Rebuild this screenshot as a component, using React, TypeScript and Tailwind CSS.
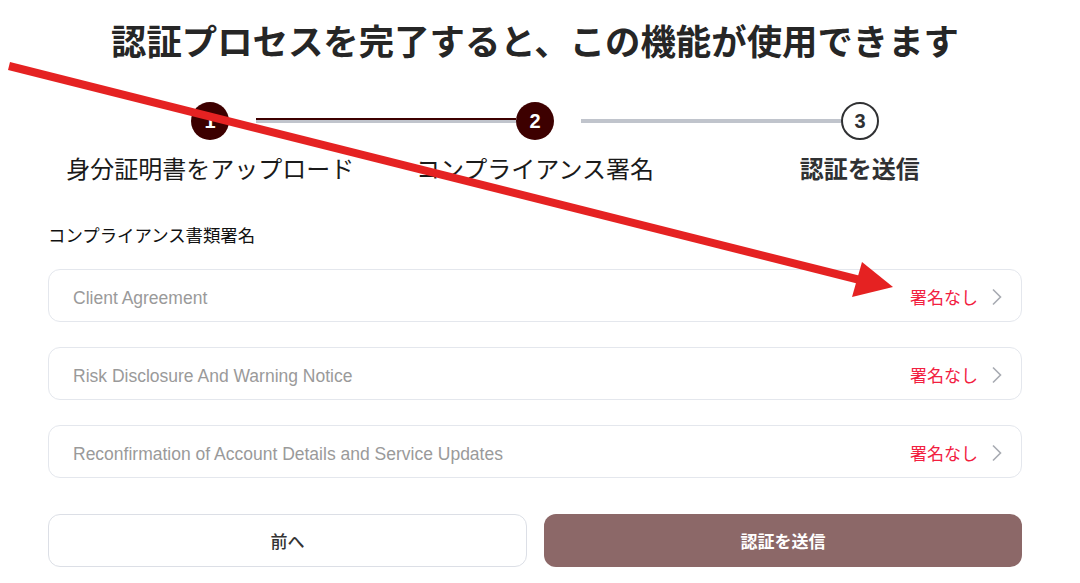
import React from "react";

const docs = [
  "Client Agreement",
  "Risk Disclosure And Warning Notice",
  "Reconfirmation of Account Details and Service Updates",
];

function Chevron() {
  return (
    <svg width="12" height="18" viewBox="0 0 12 18" fill="none">
      <path d="M2 1.5 L9.5 9 L2 16.5" stroke="#a8abb2" strokeWidth="1.6" />
    </svg>
  );
}

export default function App() {
  const jp = { fontFamily: '"Noto Sans CJK JP", "Noto Sans", sans-serif' };
  return (
    <div
      className="relative w-[1080px] h-[583px] overflow-hidden bg-white"
      style={jp}
    >
      <div className="flex flex-col px-[48px] pt-[18px] w-[1070px]">
        <h1 className="text-center text-[35.4px] leading-[44px] font-bold text-[#262626] w-[974px] whitespace-nowrap">
          認証プロセスを完了すると、この機能が使用できます
        </h1>

        {/* stepper circles */}
        <div className="mt-[40px] flex items-center justify-center h-[38px] w-[974px]">
          <div className="w-[38px] h-[38px] rounded-full bg-[#3d0000] text-white flex items-center justify-center text-[20px] font-bold" style={{ fontFamily: '"Liberation Sans", Arial, sans-serif' }}>1</div>
          <div className="w-[27px]" />
          <div className="relative w-[260px] h-[4px] bg-[#c0c4cc]">
            <div className="absolute left-0 top-[-1px] w-full h-[2px] bg-[#3d0000]" />
          </div>
          <div className="w-[38px] h-[38px] rounded-full bg-[#3d0000] text-white flex items-center justify-center text-[20px] font-bold" style={{ fontFamily: '"Liberation Sans", Arial, sans-serif' }}>2</div>
          <div className="w-[27px]" />
          <div className="w-[260px] h-[4px] bg-[#c0c4cc]" />
          <div className="w-[38px] h-[38px] rounded-full bg-white border-2 border-[#303133] text-[#303133] flex items-center justify-center text-[20px] font-bold" style={{ fontFamily: '"Liberation Sans", Arial, sans-serif' }}>3</div>
        </div>

        {/* step labels */}
        <div className="mt-[12px] grid grid-cols-3 w-[974px] text-[24px] leading-[32px] text-[#1a1a1a]">
          <div className="text-center">身分証明書をアップロード</div>
          <div className="text-center">コンプライアンス署名</div>
          <div className="text-center font-bold text-[#303133]">認証を送信</div>
        </div>

        <div className="mt-[39px] text-[17.4px] leading-[24px] text-[#111]">
          コンプライアンス書類署名
        </div>

        <div className="mt-[22px] flex flex-col gap-[25px] w-[974px]">
          {docs.map((d) => (
            <div
              key={d}
              className="h-[53px] rounded-[12px] border border-[#e4e7ed] flex items-center justify-between pl-[24px] pr-[18px]"
            >
              <span
                className="text-[17.5px] text-[#9a9a9a] pt-[5px]"
                style={{ fontFamily: '"Liberation Sans", Arial, sans-serif' }}
              >
                {d}
              </span>
              <span className="flex items-center gap-[13px] pt-[2px]">
                <span className="text-[17px] text-[#f2203f]">署名なし</span>
                <Chevron />
              </span>
            </div>
          ))}
        </div>

        <div className="mt-[36px] flex gap-[17px] w-[974px]">
          <button className="w-[479px] h-[53px] rounded-[12px] border border-[#dcdfe6] bg-white text-[17px] font-medium text-[#333]">
            前へ
          </button>
          <button className="w-[478px] h-[53px] rounded-[12px] bg-[#8c6868] text-[17px] font-bold text-white">
            認証を送信
          </button>
        </div>
      </div>

      {/* annotation arrow */}
      <svg
        className="absolute left-0 top-0 pointer-events-none"
        width="1080"
        height="583"
        viewBox="0 0 1080 583"
      >
        <line x1="9" y1="66" x2="860" y2="280" stroke="#e52222" strokeWidth="8" />
        <polygon points="862,262 852,297 893,287" fill="#e52222" />
      </svg>
    </div>
  );
}
